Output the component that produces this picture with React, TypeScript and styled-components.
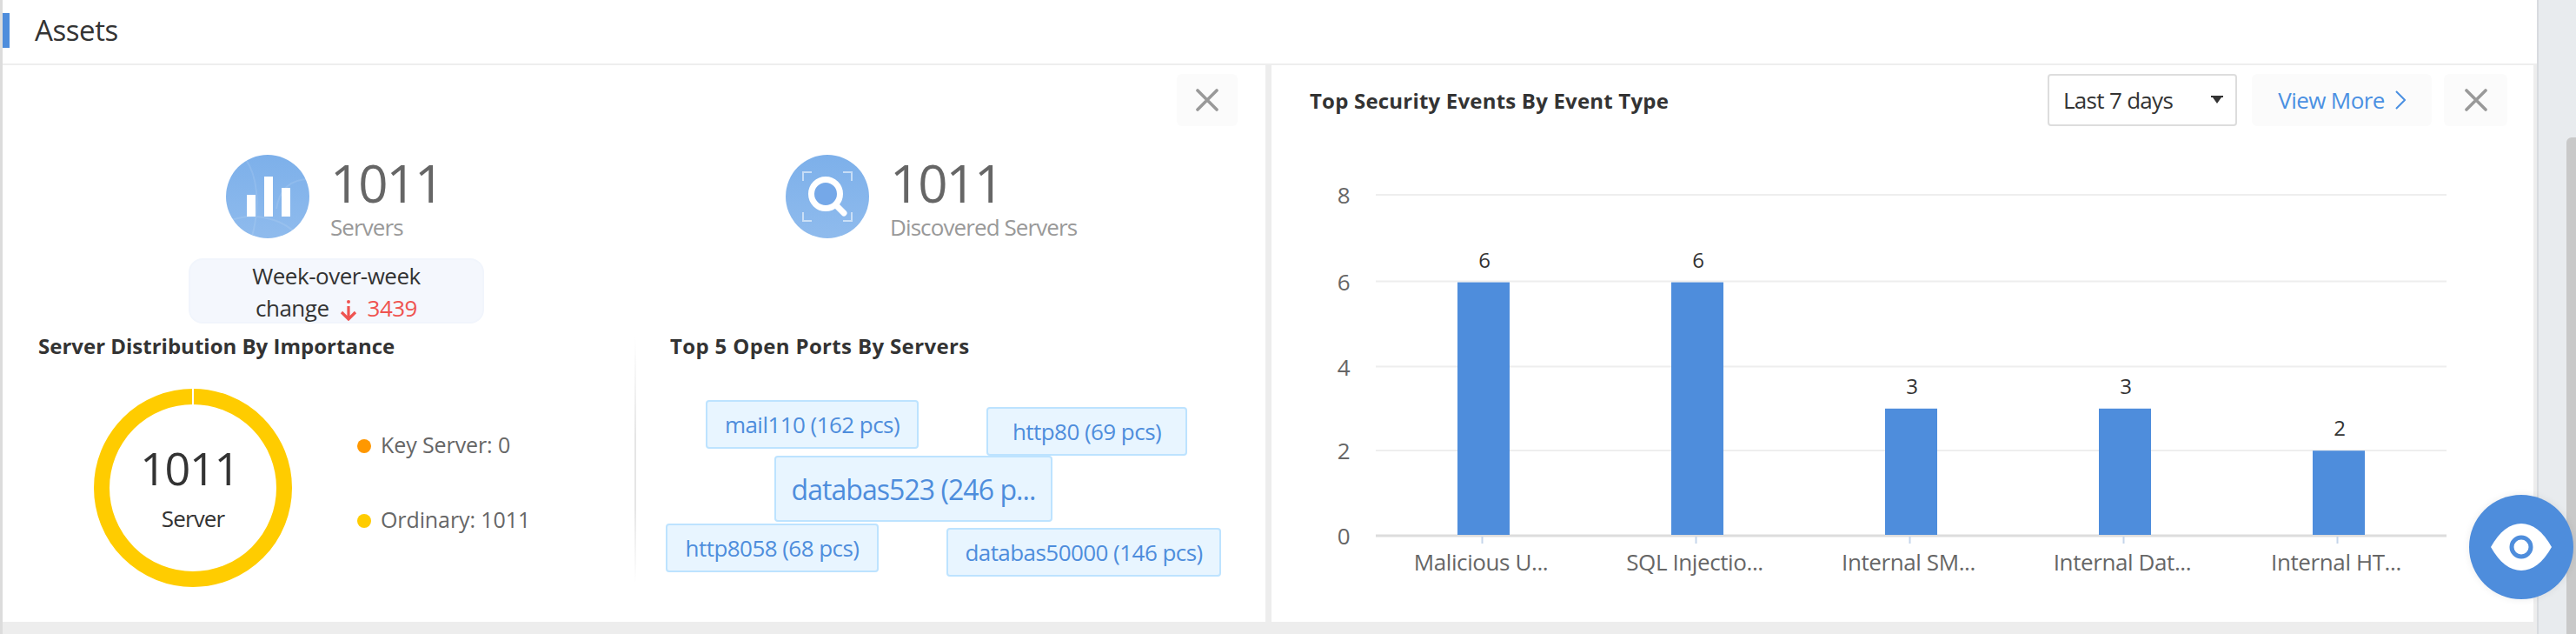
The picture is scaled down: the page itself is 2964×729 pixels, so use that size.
import styled, { createGlobalStyle } from 'styled-components';

const GlobalStyle = createGlobalStyle`
  html, body {
    margin: 0;
    padding: 0;
    overflow: hidden;
    background: #ededed;
    font-family: "Open Sans", "Liberation Sans", sans-serif;
  }
`

const Page = styled.div`
  display: flex;
  width: 2964px;
  height: 729px;
  overflow: hidden;
`

const Main = styled.div`
  width: 2919px;
  flex: none;
  border-left: 3px solid #dcdcdc;
  box-sizing: border-box;
  background: #ededed;
`

const Track = styled.div`
  flex: 1;
  display: flex;
  justify-content: flex-end;
  padding-top: 158px;
  background: #e8ebee;
  border-left: 2px solid #d8dbdf;
`

const Thumb = styled.div`
  width: 11px;
  background: #c9c9c9;
  border-top-left-radius: 6px;
`

const Header = styled.div`
  display: flex;
  height: 73px;
  background: #fff;
  border-bottom: 2px solid #eee;
`

const HeaderBar = styled.div`
  width: 8px;
  height: 40px;
  margin-top: 15px;
  background: #4e8ddc;
`

const HeaderTitle = styled.div`
  margin-left: 29px;
  font-size: 33px;
  line-height: 70px;
  color: #333;
  letter-spacing: -0.4px;
`

const Panels = styled.div`
  display: grid;
  grid-template-columns: 1453px 1452px;
  column-gap: 7px;
  height: 640px;
`

const Panel = styled.div`
  background: #fff;
  display: flex;
  flex-direction: column;
`

const LeftTop = styled.div`
  display: flex;
  justify-content: flex-end;
  padding: 10px 32px 0 0;
`

const CloseButton = styled.div<{ $wide?: boolean }>`
  width: ${p => (p.$wide ? 73 : 70)}px;
  height: 60px;
  display: flex;
  align-items: center;
  justify-content: center;
  background: #fbfbfb;
  border-radius: 6px;
`

const StatsRow = styled.div`
  display: grid;
  grid-template-columns: 727px 1fr;
  height: 194px;
  margin-top: 33px;
`

const StatColumn = styled.div<{ $left: number }>`
  padding-left: ${p => p.$left}px;
`

const Stat = styled.div`
  display: flex;
  gap: 24px;
`

const StatText = styled.div`
  display: flex;
  flex-direction: column;
`

const StatNumber = styled.div`
  margin-top: 1px;
  font-size: 60px;
  line-height: 62px;
  color: #666;
  letter-spacing: -2px;
`

const StatLabel = styled.div`
  margin-top: 5px;
  font-size: 26px;
  line-height: 30px;
  color: #999;
  letter-spacing: -0.9px;
`

const WeekBox = styled.div`
  width: 340px;
  height: 75px;
  margin: 21px 0 0 -43px;
  box-sizing: border-box;
  background: #f4f7fd;
  border: 2px solid #f1f5fc;
  border-radius: 16px;
  text-align: center;
  font-size: 26px;
  line-height: 37px;
  color: #333;
  letter-spacing: -0.5px;
`

const WeekDelta = styled.span`
  color: #ef5350;
  margin-left: 12px;
`

const DeltaArrow = styled.svg`
  width: 20px;
  height: 24px;
  margin-left: 12px;
  vertical-align: -5px;
`

const BottomRow = styled.div`
  flex: 1;
  display: grid;
  grid-template-columns: 727px 1fr;
  padding-top: 14px;
`

const Section = styled.div`
  position: relative;
`

const PortsSection = styled(Section)`
  &::before {
    content: '';
    position: absolute;
    left: 0;
    top: 2px;
    width: 2px;
    height: 282px;
    background: linear-gradient(#fff, #e6e6e6 40%, #e6e6e6 70%, #fff);
  }
`

const SectionTitle = styled.div<{ $left: number; $spacing: number }>`
  padding-left: ${p => p.$left}px;
  font-size: 24px;
  line-height: 24px;
  font-weight: 700;
  color: #333;
  letter-spacing: ${p => p.$spacing}px;
`

const DonutRow = styled.div`
  display: flex;
  align-items: center;
  margin-top: 37px;
  padding-left: 105px;
`

const DonutBox = styled.div`
  position: relative;
  width: 228px;
  height: 228px;
`

const DonutCenter = styled.div`
  position: absolute;
  inset: 0;
  display: flex;
  flex-direction: column;
  align-items: center;
  padding-top: 63px;
  box-sizing: border-box;
`

const DonutNumber = styled.div`
  margin-right: 8px;
  font-size: 52px;
  line-height: 56px;
  color: #333;
  letter-spacing: -1.3px;
`

const DonutLabel = styled.div`
  margin-top: 15px;
  font-size: 26px;
  line-height: 30px;
  color: #333;
  letter-spacing: -0.9px;
`

const Legend = styled.div`
  display: flex;
  flex-direction: column;
  gap: 56px;
  margin-left: 75px;
  margin-top: -14px;
`

const LegendItem = styled.div`
  display: flex;
  align-items: center;
  gap: 11px;
  font-size: 25px;
  line-height: 30px;
  color: #666;
  letter-spacing: -0.1px;
`

const LegendDot = styled.span<{ $color: string }>`
  width: 16px;
  height: 16px;
  margin-top: 3px;
  border-radius: 50%;
  background: ${p => p.$color};
`

const Cloud = styled.div`
  position: relative;
  height: 240px;
  margin-top: 50px;
`

const Tag = styled.div<{ $x: number; $y: number; $w: number; $big?: boolean }>`
  position: absolute;
  left: ${p => p.$x}px;
  top: ${p => p.$y}px;
  width: ${p => p.$w}px;
  height: ${p => (p.$big ? 76 : 56)}px;
  box-sizing: border-box;
  display: flex;
  align-items: center;
  justify-content: center;
  background: #e8f5ff;
  border: 2px solid #bde3ff;
  border-radius: 4px;
  color: #4e8ddc;
  font-size: ${p => (p.$big ? 32 : 26)}px;
  letter-spacing: ${p => (p.$big ? -0.95 : -0.55)}px;
  white-space: nowrap;
`

const RightHead = styled.div`
  display: flex;
  align-items: center;
  height: 60px;
  margin-top: 10px;
  padding: 0 30px 0 44px;
`

const RightTitle = styled.div`
  flex: 1;
  font-size: 24px;
  font-weight: 700;
  color: #333;
  letter-spacing: 0.2px;
`

const Select = styled.div`
  width: 218px;
  height: 60px;
  box-sizing: border-box;
  display: flex;
  align-items: center;
  justify-content: space-between;
  padding: 0 14px 0 16px;
  border: 2px solid #ddd;
  border-radius: 4px;
  font-size: 26px;
  color: #333;
  letter-spacing: -0.7px;
`

const Caret = styled.svg`
  width: 14px;
  height: 10px;
`

const ViewMore = styled.div`
  width: 207px;
  height: 60px;
  margin: 0 14px 0 17px;
  display: flex;
  align-items: center;
  justify-content: center;
  gap: 12px;
  background: #fbfbfb;
  border-radius: 6px;
  color: #4a90e2;
  font-size: 26px;
  letter-spacing: -0.6px;
`

const Chart = styled.svg`
  display: block;
  margin-top: 25px;
`

const AxisText = styled.text`
  font-size: 26px;
  fill: #666;
  letter-spacing: -0.4px;
`

const ValueText = styled.text`
  font-size: 24px;
  fill: #333;
`

const EyeButton = styled.div`
  position: absolute;
  left: 2841px;
  top: 569px;
  width: 120px;
  height: 120px;
  display: flex;
  align-items: center;
  justify-content: center;
  border-radius: 50%;
  background: #4e8ddc;
  box-shadow: 0 0 8px rgba(0, 0, 0, 0.08);
`

const CloseIcon = () => (
  <svg width="26" height="26" viewBox="0 0 26 26">
    <path d="M2 2 L24 24 M24 2 L2 24" stroke="#999" strokeWidth="3.6" strokeLinecap="round" />
  </svg>
)

const ServersIcon = () => (
  <svg width="96" height="96" viewBox="0 0 96 96">
    <defs>
      <linearGradient id="badgeA" x1="0" y1="0" x2="0" y2="1">
        <stop offset="0" stopColor="#7db0ea" />
        <stop offset="1" stopColor="#8fbbed" />
      </linearGradient>
    </defs>
    <circle cx="48" cy="48" r="48" fill="url(#badgeA)" />
    <path d="M22 4 C36 24 40 56 30 94 M96 28 C76 28 62 38 58 62 M4 76 C30 66 60 72 78 88" fill="none" stroke="#fff" strokeOpacity="0.1" strokeWidth="2" />
    <rect x="24" y="46" width="10" height="25" fill="#fff" />
    <rect x="44" y="25" width="10" height="46" fill="#fff" />
    <rect x="64" y="38" width="10" height="33" fill="#fff" />
  </svg>
)

const DiscoveredIcon = () => (
  <svg width="96" height="96" viewBox="0 0 96 96">
    <defs>
      <linearGradient id="badgeB" x1="0" y1="0" x2="0" y2="1">
        <stop offset="0" stopColor="#7db0ea" />
        <stop offset="1" stopColor="#8fbbed" />
      </linearGradient>
    </defs>
    <circle cx="48" cy="48" r="48" fill="url(#badgeB)" />
    <path d="M20 30 V20 H30 M66 20 H76 V30 M20 66 V76 H30 M66 76 H76 V66" fill="none" stroke="#fff" strokeOpacity="0.55" strokeWidth="2" />
    <circle cx="46" cy="45" r="16.5" fill="#75a8e8" stroke="#fff" strokeWidth="7" />
    <path d="M58 58 L67 67" stroke="#fff" strokeWidth="7" strokeLinecap="round" />
  </svg>
)

const bars = [
  { label: 'Malicious U...', value: 6 },
  { label: 'SQL Injectio...', value: 6 },
  { label: 'Internal SM...', value: 3 },
  { label: 'Internal Dat...', value: 3 },
  { label: 'Internal HT...', value: 2 },
];

const gridLines = [
  { label: '0', y: 446 },
  { label: '2', y: 348 },
  { label: '4', y: 251.5 },
  { label: '6', y: 153.5 },
  { label: '8', y: 54 },
];

const ports = [
  { text: 'mail110 (162 pcs)', x: 82, y: 0, w: 245 },
  { text: 'http80 (69 pcs)', x: 405, y: 8, w: 231 },
  { text: 'databas523 (246 p...', x: 161, y: 64, w: 320, big: true },
  { text: 'http8058 (68 pcs)', x: 36, y: 142, w: 245 },
  { text: 'databas50000 (146 pcs)', x: 359, y: 147, w: 316 },
];

function BarChart() {
  return (
    <Chart width="1452" height="545" viewBox="0 0 1452 545">
      {gridLines.map(g => (
        <g key={g.label}>
          <line x1="120" x2="1352" y1={g.y} y2={g.y} stroke={g.label === '0' ? '#ddd' : '#eee'} strokeWidth={g.label === '0' ? 3 : 2} />
          <AxisText x="83" y={g.y + 10} textAnchor="middle">{g.label}</AxisText>
        </g>
      ))}
      {bars.map((b, i) => {
        const center = 244 + i * 246;
        const height = b.value * 48.4;
        return (
          <g key={b.label}>
            <rect x={center - 30} y={445 - height} width="60" height={height} fill="#4e8ddc" />
            <ValueText x={center + 1} y={445 - height - 17} textAnchor="middle">{b.value}</ValueText>
            <line x1={center - 1.5} x2={center - 1.5} y1="447" y2="455" stroke="#c5d5ea" strokeWidth="2" />
            <AxisText x={center - 3} y="486" textAnchor="middle">{b.label}</AxisText>
          </g>
        );
      })}
    </Chart>
  );
}

export default function App() {
  return (
    <Page>
      <GlobalStyle />
      <Main>
        <Header>
          <HeaderBar />
          <HeaderTitle>Assets</HeaderTitle>
        </Header>
        <Panels>
          <Panel>
            <LeftTop>
              <CloseButton><CloseIcon /></CloseButton>
            </LeftTop>
            <StatsRow>
              <StatColumn $left={257}>
                <Stat>
                  <ServersIcon />
                  <StatText>
                    <StatNumber>1011</StatNumber>
                    <StatLabel>Servers</StatLabel>
                  </StatText>
                </Stat>
                <WeekBox>
                  Week-over-week<br />
                  change
                  <DeltaArrow viewBox="0 0 20 24">
                    <circle cx="10" cy="2" r="2" fill="#ef5350" />
                    <path d="M10 7 V22 M2 14 L10 22 L18 14" fill="none" stroke="#ef5350" strokeWidth="3.2" />
                  </DeltaArrow>
                  <WeekDelta>3439</WeekDelta>
                </WeekBox>
              </StatColumn>
              <StatColumn $left={174}>
                <Stat>
                  <DiscoveredIcon />
                  <StatText>
                    <StatNumber>1011</StatNumber>
                    <StatLabel>Discovered Servers</StatLabel>
                  </StatText>
                </Stat>
              </StatColumn>
            </StatsRow>
            <BottomRow>
              <Section>
                <SectionTitle $left={41} $spacing={0}>Server Distribution By Importance</SectionTitle>
                <DonutRow>
                  <DonutBox>
                    <svg width="228" height="228" viewBox="0 0 228 228">
                      <circle cx="114" cy="114" r="105" fill="none" stroke="#ffcc00" strokeWidth="18" />
                      <rect x="113" y="0" width="2" height="20" fill="#fff" />
                    </svg>
                    <DonutCenter>
                      <DonutNumber>1011</DonutNumber>
                      <DonutLabel>Server</DonutLabel>
                    </DonutCenter>
                  </DonutBox>
                  <Legend>
                    <LegendItem><LegendDot $color="#ff9800" />Key Server: 0</LegendItem>
                    <LegendItem><LegendDot $color="#ffcc00" />Ordinary: 1011</LegendItem>
                  </Legend>
                </DonutRow>
              </Section>
              <PortsSection>
                <SectionTitle $left={41} $spacing={0.35}>Top 5 Open Ports By Servers</SectionTitle>
                <Cloud>
                  {ports.map(port => (
                    <Tag key={port.text} $x={port.x} $y={port.y} $w={port.w} $big={port.big}>{port.text}</Tag>
                  ))}
                </Cloud>
              </PortsSection>
            </BottomRow>
          </Panel>
          <Panel>
            <RightHead>
              <RightTitle>Top Security Events By Event Type</RightTitle>
              <Select>
                Last 7 days
                <Caret viewBox="0 0 14 10"><path d="M0 0 H14 V2 H12 L7 9 L2 2 H0 Z" fill="#333" /></Caret>
              </Select>
              <ViewMore>
                View More
                <svg width="12" height="22" viewBox="0 0 12 22">
                  <path d="M1 1 L11 11 L1 21" fill="none" stroke="#4a90e2" strokeWidth="2" />
                </svg>
              </ViewMore>
              <CloseButton $wide><CloseIcon /></CloseButton>
            </RightHead>
            <BarChart />
          </Panel>
        </Panels>
      </Main>
      <Track><Thumb /></Track>
      <EyeButton>
        <svg width="70" height="54" viewBox="0 0 70 54">
          <path d="M0 27 C10 9 22 0 35 0 C48 0 60 9 70 27 C60 45 48 54 35 54 C22 54 10 45 0 27 Z" fill="#fff" />
          <circle cx="35" cy="27" r="11" fill="#fff" stroke="#4e8ddc" strokeWidth="5" />
        </svg>
      </EyeButton>
    </Page>
  );
}
